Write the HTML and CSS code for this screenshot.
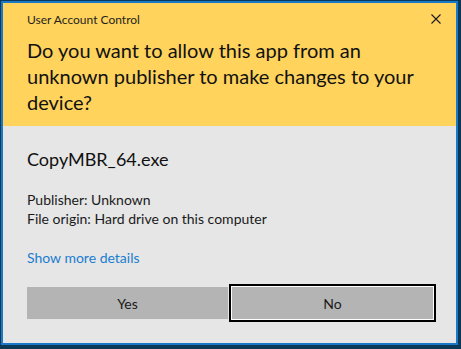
FILE: index.html
```html
<!DOCTYPE html>
<html lang="en">
<head>
  <meta charset="UTF-8" />
  <title>User Account Control</title>
  <link rel="stylesheet" href="styles.css">
</head>
<body>

<div class="dialog">
  <div class="dialog-header">
    <div class="title-row">
      <span class="title">User Account Control</span>
      <svg class="close" width="10" height="10" viewBox="0 0 10 10">
        <path d="M0.5 0.5 L9.5 9.5 M9.5 0.5 L0.5 9.5" stroke="#1a1a1a" stroke-width="1.1" fill="none" />
      </svg>
    </div>
    <h1>Do you want to allow this app from an unknown publisher to make changes to your device?</h1>
  </div>

  <div class="dialog-body">
    <div class="app-name">CopyMBR_64.exe</div>
    <div class="app-info">
      <p>Publisher: Unknown</p>
      <p>File origin: Hard drive on this computer</p>
    </div>
    <a class="details" href="#">Show more details</a>
    <div class="buttons">
      <button class="btn">Yes</button>
      <button class="btn focused">No</button>
    </div>
  </div>
</div>

</body>
</html>
```
FILE: styles.css
```css
* {
  margin: 0; padding: 0; box-sizing: border-box;
  font-family: 'Lato', sans-serif;
}
body {
  background: #0c3858;
  padding: 1px 0 0 1px;
  min-height: 100vh;
}
.dialog {
  width: 457px;
  height: 344px;
  border: 2px solid #1a78c9;
  background: #e6e6e6;
}
.dialog-header {
  background: #ffd35c;
  height: 123px;
  padding: 8px 22px 0 24px;
}
.title-row {
  display: flex;
  justify-content: space-between;
  align-items: center;
  height: 16px;
}
.title {
  font-size: 12px;
  color: #1f1f1f;
}
.close {
  margin-right: -7px;
}
.dialog-header h1 {
  margin-top: 10px;
  font-size: 20px;
  line-height: 26px;
  font-weight: 400;
  color: #111;
}
.dialog-body {
  padding: 21px 22px 0 24px;
}
.app-name {
  font-size: 18px;
  line-height: 24px;
  color: #111;
}
.app-info {
  margin-top: 19px;
  font-size: 14px;
  line-height: 19px;
  color: #1a1a1a;
}
.details {
  display: block;
  margin-top: 20px;
  font-size: 14px;
  line-height: 20px;
  color: #1a7dd0;
  text-decoration: none;
}
.buttons {
  display: grid;
  grid-template-columns: 201px 201px;
  gap: 4px;
  margin-top: 19px;
}
.btn {
  height: 32px;
  border: none;
  background: #b4b4b4;
  font-size: 14px;
  color: #1a1a1a;
}
.btn.focused {
  box-shadow: 0 0 0 1px #fff, 0 0 0 3px #000;
}
```
